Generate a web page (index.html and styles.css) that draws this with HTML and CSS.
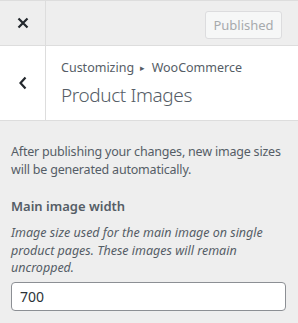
FILE: index.html
```html
<!DOCTYPE html>
<html lang="en">
<head>
  <meta charset="UTF-8" />
  <meta name="viewport" content="width=device-width, initial-scale=1.0"/>
  <title>Product Images</title>
  <link rel="stylesheet" href="styles.css">
</head>
<body>
  <div class="header">
    <div class="close">
      <svg width="12" height="12" viewBox="0 0 12 12"><path d="M1.5 1.5l9 9M10.5 1.5l-9 9" stroke="#23282d" stroke-width="2.2" fill="none"/></svg>
    </div>
    <button class="publish" disabled>Published</button>
  </div>

  <div class="section-head">
    <div class="back">
      <svg width="10" height="14" viewBox="0 0 10 14"><path d="M7.5 1.5L2.5 7l5 5.5" stroke="#23282d" stroke-width="2.2" fill="none"/></svg>
    </div>
    <div class="titles">
      <div class="crumbs">Customizing <span class="arrow">▸</span> WooCommerce</div>
      <div class="title">Product Images</div>
    </div>
  </div>

  <div class="content">
    <p class="note">After publishing your changes, new image sizes will be generated automatically.</p>
    <label class="label" for="width">Main image width</label>
    <p class="desc">Image size used for the main image on single product pages. These images will remain uncropped.</p>
    <input type="text" id="width" class="field" value="700" />
  </div>
</body>
</html>
```

FILE: styles.css
```css
* {
  margin: 0;
  padding: 0;
  box-sizing: border-box;
  font-family: 'Noto Sans', 'Open Sans', sans-serif;
}

body {
  background: #eee;
  color: #555d66;
  width: 298px;
}

.header {
  display: flex;
  align-items: center;
  height: 46px;
  border-top: 1px solid #ddd;
  border-bottom: 1px solid #ddd;
}

.close,
.back {
  width: 46px;
  height: 100%;
  border-right: 1px solid #ddd;
  display: flex;
  align-items: center;
  justify-content: center;
}

.publish {
  margin: 3px 16px 0 auto;
  width: 77px;
  height: 28px;
  background: #f6f7f7;
  border: 1px solid #dcdcde;
  border-radius: 3px;
  color: #a7aaad;
  font-size: 13px;
}

.section-head {
  display: flex;
  height: 75px;
  background: #fff;
  border-bottom: 1px solid #ddd;
}

.titles {
  padding: 13px 0 0 15px;
}

.crumbs {
  font-size: 12.5px;
  line-height: 18px;
  color: #555d66;
}

.arrow {
  font-size: 9px;
  position: relative;
  top: -1px;
  margin: 0 3px;
}

.title {
  margin-top: 4px;
  font-size: 19px;
  font-weight: 300;
  letter-spacing: -0.4px;
  line-height: 26px;
  color: #555d66;
}

.content {
  padding: 22px 12px 12px 11px;
}

.note {
  font-size: 12.5px;
  letter-spacing: -0.2px;
  line-height: 18px;
  color: #555d66;
  margin-bottom: 17px;
}

.label {
  display: block;
  font-size: 13px;
  font-weight: 600;
  line-height: 20px;
  color: #555d66;
  margin-bottom: 8px;
}

.desc {
  font-size: 12.5px;
  font-style: italic;
  line-height: 17.5px;
  color: #555d66;
  margin-bottom: 5px;
}

.field {
  display: block;
  width: 275px;
  height: 29px;
  border: 1px solid #8c8f94;
  border-radius: 4px;
  background: #fff;
  padding: 0 8px;
  font-size: 14px;
  color: #2c3338;
  outline: none;
}
```
